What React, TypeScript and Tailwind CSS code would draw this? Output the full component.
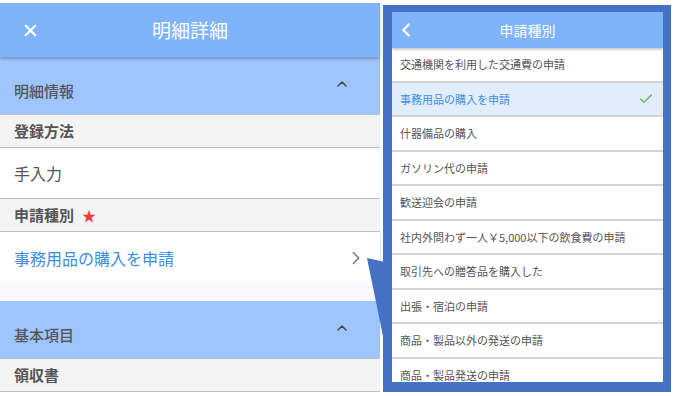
import { Check, ChevronLeft, ChevronRight, ChevronUp, X } from "lucide-react";

const FONT = { fontFamily: '"Noto Sans CJK JP", "Noto Sans", sans-serif' };

const kinds = [
  "交通機関を利用した交通費の申請",
  "事務用品の購入を申請",
  "什器備品の購入",
  "ガソリン代の申請",
  "歓送迎会の申請",
  "社内外問わず一人￥5,000以下の飲食費の申請",
  "取引先への贈答品を購入した",
  "出張・宿泊の申請",
  "商品・製品以外の発送の申請",
  "商品・製品発送の申請",
];

function SectionHeader({ title }: { title: string }) {
  return (
    <div className="flex h-[58px] items-end justify-between border-b border-[#b9c4d2] bg-[#9ec5fd] pb-[12px] pl-[14px] pr-[30px]">
      <span className="text-[15px] font-medium text-[#555]">{title}</span>
      <ChevronUp className="mb-[10px] h-[16px] w-[16px] text-[#444]" strokeWidth={2.2} />
    </div>
  );
}

function LabelRow({ label, required }: { label: string; required?: boolean }) {
  return (
    <div className="flex h-[33px] items-center border-b border-[#bdbdbd] bg-[#f4f4f4] pl-[14px]">
      <span className="text-[15px] font-bold text-[#555]">{label}</span>
      {required && <span className="ml-[8px] text-[14px] text-[#f03a3a]">★</span>}
    </div>
  );
}

function DetailPanel() {
  return (
    <div className="relative w-[380px] pt-[3px]">
      <div className="relative z-10 flex h-[54px] items-center bg-[#80b4fa] shadow-[0_2px_3px_rgba(0,0,0,0.25)]">
        <X className="ml-[21px] h-[19px] w-[19px] text-white" strokeWidth={2.6} />
        <div className="flex-1 pr-[40px] text-center text-[19px] text-white">明細詳細</div>
      </div>
      <SectionHeader title="明細情報" />
      <LabelRow label="登録方法" />
      <div className="flex h-[51px] items-center border-b border-[#bdbdbd] bg-white pl-[14px] text-[16px] text-[#555]">
        手入力
      </div>
      <LabelRow label="申請種別" required />
      <div className="flex h-[51px] items-center justify-between bg-white pl-[14px] pr-[13px] shadow-[0_2px_2px_rgba(0,0,0,0.3)]">
        <span className="text-[16px] text-[#3a8fe0]">事務用品の購入を申請</span>
        <ChevronRight className="h-[22px] w-[22px] text-[#777]" strokeWidth={1.6} />
      </div>
      <div className="h-[18px] bg-[#f8f8fd]" />
      <SectionHeader title="基本項目" />
      <LabelRow label="領収書" />
    </div>
  );
}

function KindPanel() {
  return (
    <div className="ml-[3px] mt-[5px] h-[387px] w-[288px] border-b-[10px] border-l-[9px] border-r-[8px] border-t-[7px] border-[#4472c4]">
      <div className="flex h-full flex-col overflow-hidden bg-white">
        <div className="relative z-10 flex h-[36px] shrink-0 items-center bg-[#80b4fa] shadow-[0_2px_2px_rgba(0,0,0,0.2)]">
          <ChevronLeft className="ml-[3px] h-[22px] w-[22px] text-white" strokeWidth={2.6} />
          <div className="flex-1 pr-[25px] text-center text-[14px] text-white">申請種別</div>
        </div>
        {kinds.map((k, i) => (
          <div
            key={k}
            className={`flex h-[34.5px] shrink-0 items-center justify-between border-b-2 border-[#d4d4d4] pl-[8px] pr-[9px] text-[11px] ${
              i === 1 ? "bg-[#e2edfc] text-[#3f8fe0]" : "bg-white text-[#555]"
            }`}
          >
            <span>{k}</span>
            {i === 1 && <Check className="h-[16px] w-[16px] text-[#5cb85c]" strokeWidth={2} />}
          </div>
        ))}
      </div>
    </div>
  );
}

export default function App() {
  return (
    <div className="relative flex h-[396px] w-[675px] overflow-hidden bg-white" style={FONT}>
      <DetailPanel />
      <KindPanel />
      <svg className="pointer-events-none absolute left-0 top-0" width="675" height="396">
        <polygon points="367,258 385,262 385,346" fill="#4472c4" />
      </svg>
    </div>
  );
}
